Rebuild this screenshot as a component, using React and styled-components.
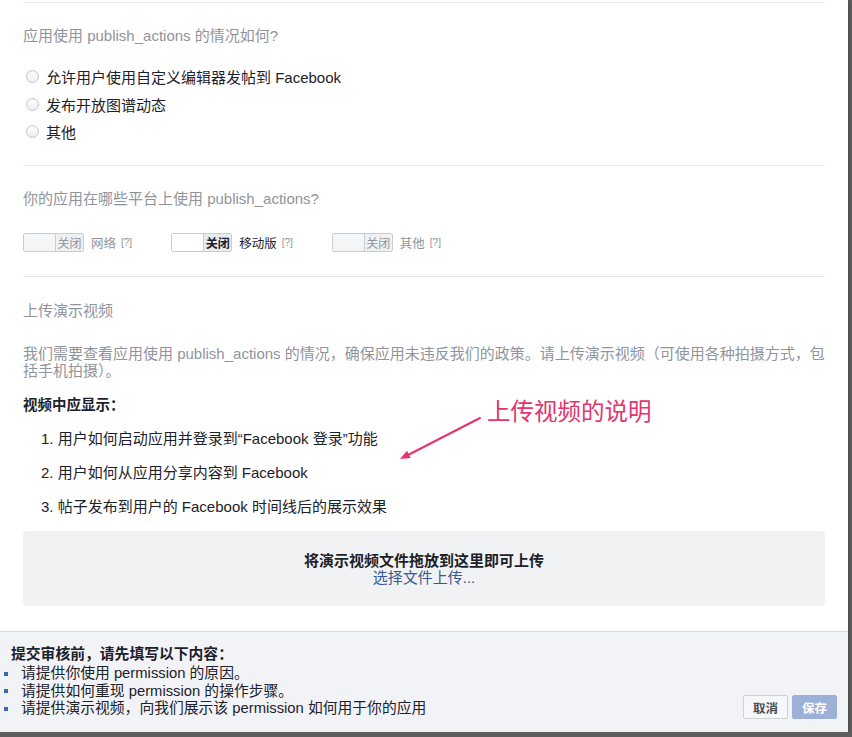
import React from 'react';
import styled, { createGlobalStyle } from 'styled-components';

const GlobalStyle = createGlobalStyle`
  body {
    margin: 0;
    padding: 0;
    background: #5e5e5e;
    font-family: 'Liberation Sans', 'Noto Sans CJK SC', sans-serif;
    color: #1d2129;
  }
`;

const Modal = styled.div`
  position: relative;
  width: 848px;
  height: 732px;
  background: #fff;
  display: flex;
  flex-direction: column;
  overflow: hidden;
  box-shadow: 0 1px 4px rgba(0, 0, 0, 0.35);
`;

const Body = styled.div`
  flex: 1;
  padding: 2px 23px 0;
`;

const Section = styled.div`
  border-top: 1px solid #e3e5e8;
  padding: ${p => p.$pad};
`;

const Question = styled.div`
  font-size: 15px;
  line-height: 18px;
  color: #90949c;
`;

const RadioList = styled.div`
  margin-top: 18px;
`;

const RadioRow = styled.label`
  display: flex;
  align-items: center;
  height: 27.5px;
  font-size: 15px;
  color: #1d2129;
`;

const RadioDot = styled.span`
  width: 11px;
  height: 11px;
  margin: 0 7px 0 3px;
  border-radius: 50%;
  border: 1px solid #c4c7cc;
  background: linear-gradient(#ffffff, #eceef0);
  box-shadow: inset 0 1px 1px rgba(0, 0, 0, 0.05);
`;

const ToggleRow = styled.div`
  display: flex;
  align-items: center;
  gap: 39px;
  margin-top: 25px;
`;

const ToggleGroup = styled.div`
  display: flex;
  align-items: center;
`;

const Toggle = styled.span`
  display: flex;
  width: 61px;
  height: 19px;
  box-sizing: border-box;
  border: 1px solid #c9cdd2;
  border-radius: 2px;
  overflow: hidden;
`;

const ToggleKnob = styled.span`
  width: 31px;
  background: ${p => (p.$on ? '#ffffff' : '#f4f5f7')};
  border-right: 1px solid #c9cdd2;
`;

const ToggleText = styled.span`
  flex: 1;
  display: flex;
  align-items: center;
  justify-content: center;
  font-size: 12px;
  background: ${p => (p.$on ? '#e9ebee' : '#eff0f2')};
  color: ${p => (p.$on ? '#1d2129' : '#90949c')};
  font-weight: ${p => (p.$on ? 700 : 400)};
`;

const ToggleLabel = styled.span`
  margin-left: 7px;
  font-size: 12.5px;
  color: ${p => (p.$on ? '#1d2129' : '#90949c')};
`;

const Help = styled.span`
  margin-left: 5px;
  font-size: 10px;
  color: #90949c;
`;

const Para = styled.p`
  margin: 24.5px 0 0;
  font-size: 15px;
  line-height: 17px;
  color: #90949c;
  white-space: nowrap;
`;

const SubTitle = styled.div`
  margin-top: 17.5px;
  font-size: 14.5px;
  line-height: 18px;
  font-weight: 700;
  color: #1d2129;
`;

const Steps = styled.div`
  display: flex;
  flex-direction: column;
  gap: 16px;
  margin-top: 16px;
  padding-left: 18px;
`;

const Step = styled.div`
  font-size: 15px;
  line-height: 18px;
  color: #1d2129;
`;

const DropZone = styled.div`
  margin-top: 15px;
  height: 75px;
  box-sizing: border-box;
  padding-top: 21px;
  border-radius: 4px;
  background: #f1f2f3;
  text-align: center;
  font-size: 15px;
  line-height: 17px;
`;

const DropTitle = styled.div`
  font-weight: 700;
  color: #1d2129;
`;

const DropLink = styled.a`
  color: #365899;
  text-decoration: none;
`;

const Footer = styled.div`
  height: 101px;
  box-sizing: border-box;
  border-top: 1px solid #d3d6db;
  background: #f2f3f7;
  padding: 13px 11px 13px 4px;
  display: flex;
  justify-content: space-between;
`;

const Notice = styled.div`
  align-self: flex-start;
`;

const NoticeTitle = styled.div`
  margin-left: 7px;
  font-size: 14.8px;
  line-height: 18px;
  font-weight: 700;
  color: #1d2129;
`;

const NoticeList = styled.ul`
  list-style: none;
  margin: 2px 0 0;
  padding: 0;
`;

const NoticeItem = styled.li`
  display: flex;
  align-items: center;
  font-size: 14.8px;
  line-height: 17.5px;
  color: #1d2129;

  &::before {
    content: '';
    width: 4px;
    height: 4px;
    margin-right: 13px;
    background: #4267b2;
  }
`;

const Buttons = styled.div`
  align-self: flex-end;
  display: flex;
  gap: 4px;
`;

const Button = styled.button`
  height: 24px;
  padding: 0 9px;
  border-radius: 2px;
  font-family: inherit;
  font-size: 12.5px;
  font-weight: 700;
  border: 1px solid ${p => (p.$primary ? '#9cb0d8' : '#ced0d4')};
  background: ${p => (p.$primary ? '#9cb0d8' : '#f6f7f9')};
  color: ${p => (p.$primary ? '#ffffff' : '#4b4f56')};
`;

const Note = styled.div`
  position: absolute;
  left: 487px;
  top: 399px;
  font-size: 23.5px;
  line-height: 26px;
  color: #e5336d;
`;

const NoteArrow = styled.svg`
  position: absolute;
  left: 396px;
  top: 410px;
`;

const platforms = [
  { label: '网络', on: false },
  { label: '移动版', on: true },
  { label: '其他', on: false },
];

const steps = [
  '1. 用户如何启动应用并登录到“Facebook 登录”功能',
  '2. 用户如何从应用分享内容到 Facebook',
  '3. 帖子发布到用户的 Facebook 时间线后的展示效果',
];

const notices = [
  '请提供你使用 permission 的原因。',
  '请提供如何重现 permission 的操作步骤。',
  '请提供演示视频，向我们展示该 permission 如何用于你的应用',
];

export default function App() {
  return (
    <>
      <GlobalStyle />
      <Modal>
        <Body>
          <Section $pad="24px 0 19.5px">
            <Question>应用使用 publish_actions 的情况如何?</Question>
            <RadioList>
              {['允许用户使用自定义编辑器发帖到 Facebook', '发布开放图谱动态', '其他'].map(t => (
                <RadioRow key={t}>
                  <RadioDot />
                  {t}
                </RadioRow>
              ))}
            </RadioList>
          </Section>

          <Section $pad="24px 0 24px">
            <Question>你的应用在哪些平台上使用 publish_actions?</Question>
            <ToggleRow>
              {platforms.map(p => (
                <ToggleGroup key={p.label}>
                  <Toggle>
                    <ToggleKnob $on={p.on} />
                    <ToggleText $on={p.on}>关闭</ToggleText>
                  </Toggle>
                  <ToggleLabel $on={p.on}>{p.label}</ToggleLabel>
                  <Help>[?]</Help>
                </ToggleGroup>
              ))}
            </ToggleRow>
          </Section>

          <Section $pad="25px 0 0">
            <Question>上传演示视频</Question>
            <Para>
              我们需要查看应用使用 publish_actions 的情况，确保应用未违反我们的政策。请上传演示视频（可使用各种拍摄方式，包
              <br />
              括手机拍摄）。
            </Para>
            <SubTitle>视频中应显示：</SubTitle>
            <Steps>
              {steps.map(s => (
                <Step key={s}>{s}</Step>
              ))}
            </Steps>
            <DropZone>
              <DropTitle>将演示视频文件拖放到这里即可上传</DropTitle>
              <DropLink href="#">选择文件上传...</DropLink>
            </DropZone>
          </Section>
        </Body>

        <Footer>
          <Notice>
            <NoticeTitle>提交审核前，请先填写以下内容：</NoticeTitle>
            <NoticeList>
              {notices.map(n => (
                <NoticeItem key={n}>{n}</NoticeItem>
              ))}
            </NoticeList>
          </Notice>
          <Buttons>
            <Button>取消</Button>
            <Button $primary>保存</Button>
          </Buttons>
        </Footer>

        <Note>上传视频的说明</Note>
        <NoteArrow width="90" height="52" viewBox="0 0 90 52">
          <line x1="84" y1="8" x2="12" y2="45" stroke="#e5336d" strokeWidth="2" strokeLinecap="round" />
          <polygon points="4,49 14.7,47.9 11,40.8" fill="#e5336d" />
        </NoteArrow>
      </Modal>
    </>
  );
}
